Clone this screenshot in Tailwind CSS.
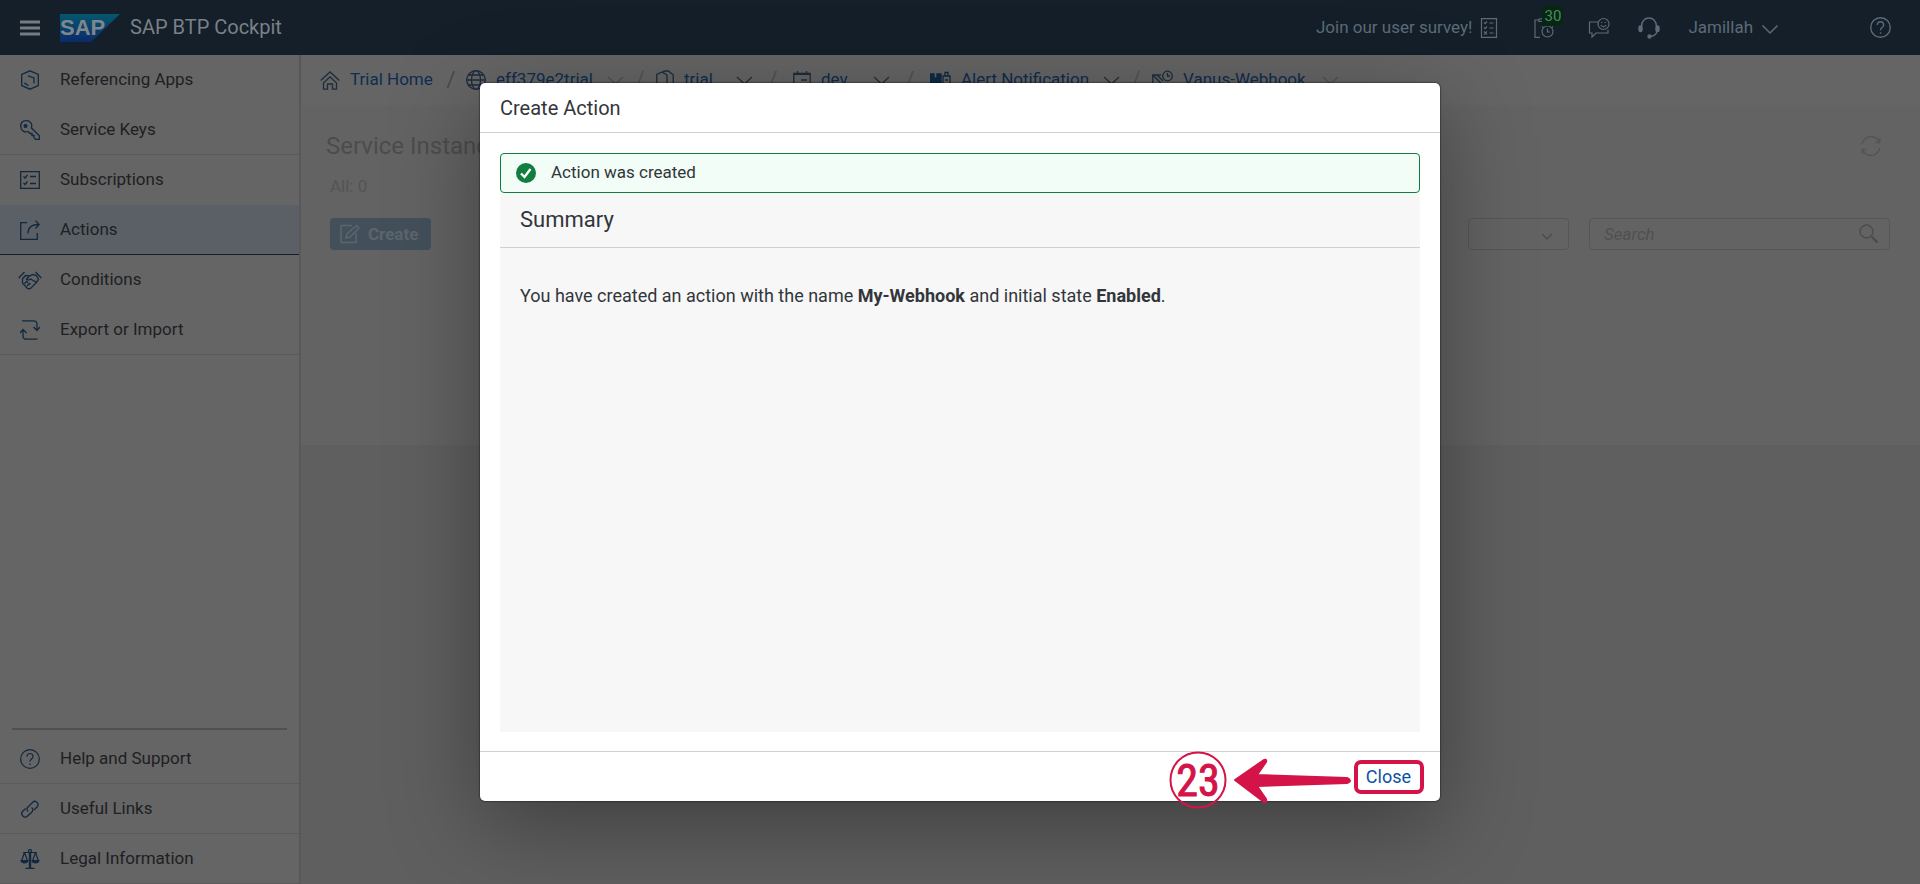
<!DOCTYPE html>
<html lang="en">
<head>
<meta charset="utf-8">
<meta name="viewport" content="width=device-width, initial-scale=1">
<title>SAP BTP Cockpit</title>
<script src="https://cdn.jsdelivr.net/npm/@tailwindcss/browser@4"></script>
</head>
<body class="relative flex min-h-screen flex-col overflow-hidden bg-[#5f5f5f] font-['Roboto',sans-serif] text-[17px] leading-6 text-[#1e2022]">

<header class="flex h-[55px] shrink-0 items-center bg-[#141f29] pl-5 pr-[29px] text-[#5c6b79]">
  <button type="button" aria-label="Menu" class="mr-5 text-[#747b81]">
    <svg class="size-5" viewBox="0 0 20 20" fill="currentColor"><path d="M0 2.500h20v3H0zM0 8.500h20v3H0zM0 14.500h20v3H0z"/></svg>
  </button>
  <svg class="mr-2.5 h-[30px] w-[60px]" viewBox="0 0 60 30" role="img" aria-label="SAP">
    <defs><linearGradient id="logo" x1="0" y1="0" x2="0" y2="1"><stop offset="0" stop-color="#04586d"/><stop offset="1" stop-color="#0b2a6b"/></linearGradient></defs>
    <path d="M0 1h60L31 29H0z" fill="url(#logo)"/>
    <text x="0" y="22" font-family="Liberation Sans" font-weight="700" font-size="22" fill="#7f868c">SAP</text>
  </svg>
  <h1 class="grow pb-0.5 text-[20px] text-[#7a8188]">SAP BTP Cockpit</h1>
  <a href="#" class="flex items-center gap-2"><span class="pb-0.5">Join our user survey!</span>
    <svg class="h-5 w-[18px]" viewBox="1 0 18 20" fill="none" stroke="currentColor" stroke-width="1.200"><path d="M2.500.6h15v18.800h-15zM5 4.500l1.200 1.200L8 3.500M5 9.500l1.200 1.200L8 8.500M5 13.500l3 3M8 13.500l-3 3M10.500 5h4M10.500 10h4M10.500 15h4"/></svg>
  </a>
  <button type="button" aria-label="30 notifications" class="relative ml-9">
    <svg class="h-5 w-[22px]" viewBox="0 0 22 20" fill="none" stroke="currentColor" stroke-width="1.200"><path d="M5 2H1v17.400h5M5 3.500V1h2l1-1h1v3.500z"/><circle cx="13.500" cy="13.500" r="5.500"/><path d="M13.500 10.500v3.500H16M9 8.500l-1 1M18 8.500l1 1"/></svg>
    <span class="absolute -top-3 left-2 rounded bg-[#062713] px-0.5 text-[15px] leading-5 text-[#4f8a5f]">30</span>
  </button>
  <button type="button" aria-label="Feedback" class="ml-8">
    <svg class="size-[22px]" viewBox="0 0 22 22" fill="none" stroke="currentColor" stroke-width="1.200"><path d="M10 5H1.500v11H4v4l4-4h12v-3"/><circle cx="15.500" cy="7" r="5.500"/><path d="M12.800 8q2.700 3.800 5.400 0M13.700 5v1M17.300 5v1"/></svg>
  </button>
  <button type="button" aria-label="Support" class="ml-7">
    <svg class="size-[22px]" viewBox="0 0 22 22" fill="none" stroke="currentColor" stroke-width="1.400"><path d="M3.500 9.500C3.500 4 7 1 11 1s7.500 3 7.500 8.500M19 13.500c0 4-3 5.500-7 6"/><rect x="1" y="9" width="3" height="5.500" rx="1.500" fill="currentColor"/><rect x="18" y="9" width="3" height="5.500" rx="1.500" fill="currentColor"/><circle cx="11.500" cy="19.500" r="1.500" fill="currentColor"/></svg>
  </button>
  <button type="button" class="ml-7 mr-[91px] flex items-center gap-2"><span class="pb-0.5">Jamillah</span>
    <svg class="h-5 w-[18px]" viewBox="0 0 18 20" fill="none" stroke="currentColor" stroke-width="1.500"><path d="M1.500 7.500L9 15l7.500-7.500"/></svg>
  </button>
  <button type="button" aria-label="Help">
    <svg class="size-[21px]" viewBox="0 0 20 20" fill="none" stroke="currentColor" stroke-width="1.300"><circle cx="10" cy="10" r="9.300"/><path d="M7 7.500C7 3.500 13 3.500 13 7.500c0 2.500-3 2.500-3 5M10 14.500V16"/></svg>
  </button>
</header>

<div class="flex grow">
  <nav aria-label="Main" class="flex w-[301px] shrink-0 flex-col border-r-2 border-[#585858] bg-[#656565]">
    <ul>
      <li><a href="#" class="flex h-[50px] items-center gap-5 pl-5">
        <svg class="size-5 text-[#12283f]" viewBox="0 0 20 20" fill="none" stroke="currentColor" stroke-width="1.300"><path d="M10 .8l8.300 3.700v11L10 19.200l-8.300-3.700v-11zM8 5.800l6 2.200v5.500M5 12.500v1l3.500 2"/></svg><span class="pb-0.5">Referencing Apps</span></a></li>
      <li><a href="#" class="flex h-[50px] items-center gap-5 border-b border-[#5a5a5a] pl-5">
        <svg class="size-5 text-[#12283f]" viewBox="0 0 20 20" fill="none" stroke="currentColor" stroke-width="1.300"><circle cx="5.500" cy="6" r="1.400" fill="currentColor"/><path d="M11.500 8C13 4 10 .7 6.500.7 3 .7.700 3 .7 6.500c0 3.500 3.500 6.500 7.300 5l2 2h2v2h2v2l1.500 1.800h3.800v-3.500z"/></svg><span class="pb-0.5">Service Keys</span></a></li>
      <li><a href="#" class="flex h-[50px] items-center gap-5 pl-5">
        <svg class="size-5 text-[#12283f]" viewBox="0 0 20 20" fill="none" stroke="currentColor" stroke-width="1.300"><path d="M.7 1.700h18.600v16.600H.7zM3.500 6.500l1.500 1.500 2.500-3M3.500 13l1.500 1.500 2.500-3M10 6.500h6M10 13.500h6"/></svg><span class="pb-0.5">Subscriptions</span></a></li>
      <li><a href="#" aria-current="page" class="flex h-[50px] items-center gap-5 border-b border-[#12202e] bg-[#5b6066] pl-5">
        <svg class="size-5 text-[#12283f]" viewBox="0 0 20 20" fill="none" stroke="currentColor" stroke-width="1.300"><path d="M7 2.700H.7v16.600h16.600V13M8 13.500C8 8 11 4.500 19 4.500M15.500.8L19.200 4.500l-3.700 4"/></svg><span class="pb-0.5">Actions</span></a></li>
      <li><a href="#" class="flex h-[50px] items-center gap-5 pl-[18px]">
        <svg class="-mr-0.5 h-5 w-6" viewBox="0 0 24 20" fill="none" stroke="#12283f" stroke-width="1.300"><path d="M.7 8L6.500 2M17.500 2L23.300 8M4 9.500L7.500 5.500l4 .5 3-1.500 4 1 2 4-2 2.500M11.500 6L8.500 9q1.500 2 4 0l6 3.500-5.500 5.500q-2 1.500-4 0L4.500 13V9.500M6.500 13.500l2-2 1.500 1.500M9 16l2.500-2.500 1 1"/></svg><span class="pb-0.5">Conditions</span></a></li>
      <li><a href="#" class="flex h-[50px] items-center gap-5 border-b border-[#5a5a5a] pl-5">
        <svg class="size-5 text-[#12283f]" viewBox="0 0 20 20" fill="none" stroke="currentColor" stroke-width="1.300"><path d="M2 .8h11.500q3.500 0 3.500 3.500V10M13.500 7L17 10.500 20 7M17.500 19.200H6.500Q3 19.200 3 15.700V10M0 13L3 9.500 6.500 13"/></svg><span class="pb-0.5">Export or Import</span></a></li>
    </ul>
    <hr class="mx-3 mb-1 mt-auto border-t-2 border-[#505050]">
    <ul>
      <li><a href="#" class="flex h-[50px] items-center gap-5 border-b border-[#5a5a5a] pl-5">
        <svg class="size-5 text-[#12283f]" viewBox="0 0 20 20" fill="none" stroke="currentColor" stroke-width="1.200"><circle cx="10" cy="10" r="9.300"/><path d="M7 7.500C7 3.500 13 3.500 13 7.500c0 2.500-3 2.500-3 5M10 14.500V16"/></svg><span class="pb-0.5">Help and Support</span></a></li>
      <li><a href="#" class="flex h-[50px] items-center gap-5 border-b border-[#5a5a5a] pl-5">
        <svg class="size-5 text-[#12283f]" viewBox="0 0 20 20" fill="none" stroke="currentColor" stroke-width="1.300"><path d="M8 12.500c-2-2-1-3.500 0-4.500l5-5c2-2 6.500 1 4.500 4.500L14 11M11.500 8.500c2 1.500 1.500 3.500 0 5l-4.500 4c-2.500 2-7-1.500-4.500-5L5.500 9.500"/></svg><span class="pb-0.5">Useful Links</span></a></li>
      <li><a href="#" class="flex h-[50px] items-center gap-5 border-b border-[#5a5a5a] pl-5">
        <svg class="size-5 text-[#12283f]" viewBox="0 0 20 20" fill="none" stroke="currentColor" stroke-width="1.200"><path d="M3 3.500h14M4.500 3.500L1.500 12M4.500 3.500l3 8.500M15.500 3.500l-3 8.500M15.500 3.500l3 8.500M5.500 19.300h9"/><path d="M1 11.500h7q-.5 2.500-3.500 2.500T1 11.500zM12 11.500h7q-.5 2.500-3.500 2.500T12 11.500z" fill="currentColor"/><path d="M10 3v16" stroke-width="2.400"/><circle cx="10" cy="2" r="1.500"/></svg><span class="pb-0.5">Legal Information</span></a></li>
    </ul>
  </nav>

  <main class="min-w-0 grow">
    <nav aria-label="Breadcrumb" class="flex h-[50px] items-center whitespace-nowrap bg-[#656565] pl-[19px] text-[#0f2d50]">
      <a href="#" class="flex w-[116px] items-center gap-2.5">
        <svg class="size-5 text-[#1c2c3c]" viewBox="0 0 20 20" fill="none" stroke="currentColor" stroke-width="1.300"><path d="M.7 10.500L10 2l9.300 8.500M3.500 13L10 6.800l6.500 6.200M3.500 12.500v6.700h4V14h5v5.200h4v-6.700"/></svg><span class="pb-0.5">Trial Home</span></a>
      <span class="w-[30px] text-center text-[22px] text-[#4a4a4a]">/</span>
      <a href="#" class="flex w-[141px] items-center gap-2.5">
        <svg class="size-5 text-[#1c2c3c]" viewBox="0 0 20 20" fill="none" stroke="currentColor" stroke-width="1.300"><circle cx="10" cy="10" r="9.300"/><ellipse cx="10" cy="10" rx="4.500" ry="9.300"/><path d="M.7 10h18.600M2.500 5h15M2.500 15h15"/></svg><span class="pb-0.5">eff379e2trial</span></a>
      <svg class="h-4 w-[17px] text-[#505050]" viewBox="0 0 17 16" fill="none" stroke="currentColor" stroke-width="1.300"><path d="M1 5l7.500 7L16 5"/></svg>
      <span class="w-8 text-center text-[22px] text-[#525252]">/</span>
      <a href="#" class="flex w-20 items-center gap-2.5">
        <svg class="h-5 w-[18px] text-[#1c2c3c]" viewBox="0 0 18 20" fill="none" stroke="currentColor" stroke-width="1.300"><path d="M4 17H.8V4.500L6 2l5 3v12H4M7 1.500L12 .8l5.200 4V17H11"/></svg><span class="pb-0.5">trial</span></a>
      <svg class="h-4 w-[17px] text-[#2a2f35]" viewBox="0 0 17 16" fill="none" stroke="currentColor" stroke-width="1.300"><path d="M1 5l7.500 7L16 5"/></svg>
      <span class="w-10 text-center text-[22px] text-[#525252]">/</span>
      <a href="#" class="flex w-20 items-center gap-2.5">
        <svg class="h-5 w-[18px] text-[#1c2c3c]" viewBox="0 0 18 20" fill="none" stroke="currentColor" stroke-width="1.300"><path d="M.8 3.500h16.400V18H.8zM4.500 1v3M13.500 1v3M8 10h6"/><path d="M1 4h16" stroke-width="2"/></svg><span class="pb-0.5">dev</span></a>
      <svg class="h-4 w-[17px] text-[#2a2f35]" viewBox="0 0 17 16" fill="none" stroke="currentColor" stroke-width="1.300"><path d="M1 5l7.500 7L16 5"/></svg>
      <span class="w-10 text-center text-[22px] text-[#525252]">/</span>
      <a href="#" class="flex w-[173px] items-center gap-2.5">
        <svg class="h-5 w-[21px] text-[#0e2a44]" viewBox="0 0 21 20" fill="none" stroke="currentColor" stroke-width="1.300"><path d="M.5 4H4v4h3V4h4v14H.5z" fill="currentColor"/><path d="M13 6h7v12h-7zM15 6V2.500h3V6M15 10h3M15 14h3"/></svg><span class="pb-0.5">Alert Notification</span></a>
      <svg class="h-4 w-[17px] text-[#2a2f35]" viewBox="0 0 17 16" fill="none" stroke="currentColor" stroke-width="1.300"><path d="M1 5l7.500 7L16 5"/></svg>
      <span class="w-8 text-center text-[22px] text-[#525252]">/</span>
      <a href="#" class="flex w-[170px] items-center gap-2.5">
        <svg class="h-5 w-[21px] text-[#1c2c3c]" viewBox="0 0 21 20" fill="none" stroke="currentColor" stroke-width="1.300"><circle cx="15.500" cy="6" r="4.800"/><path d="M15.500 3v3H18M9 5H.8v5M.8 5l8 8M5 5l6 6M.8 10v8h16v-5"/></svg><span class="pb-0.5">Vanus-Webhook</span></a>
      <svg class="h-4 w-[17px] text-[#525252]" viewBox="0 0 17 16" fill="none" stroke="currentColor" stroke-width="1.300"><path d="M1 5l7.500 7L16 5"/></svg>
    </nav>
    <section class="flex h-[340px] flex-col bg-[#636363] pl-[25px] pr-[30px] pt-[25px] text-[#4c4c4c]">
      <div class="flex h-8 items-center justify-between">
        <h2 class="text-[24px]">Service Instance: Vanus-Webhook - Actions</h2>
        <button type="button" aria-label="Refresh" class="mr-2 text-[#545454]">
          <svg class="size-[22px]" viewBox="0 0 22 22" fill="none" stroke="currentColor" stroke-width="1.400"><path d="M2 9C3.500 3.500 8 1.500 11 1.500c4 0 7 2.500 8.500 6M15.500 7.500h4.300V3M20 13c-1.500 5.500-6 7.500-9 7.500-4 0-7-2.500-8.500-6M6.500 14.500H2.200V19"/></svg>
        </button>
      </div>
      <p class="ml-1 mt-3 text-[#545454]">All: 0</p>
      <div class="mt-5 flex items-center">
        <button type="button" class="ml-1 mr-auto flex h-8 w-[101px] items-center gap-2 rounded bg-[#43505b] pl-2.5 font-bold text-[#5c656d]">
          <svg class="size-5" viewBox="0 0 20 20" fill="none" stroke="currentColor" stroke-width="1.500"><path d="M12 1.500H1v17h15V9M6 14l1-4L16.500 1.500l2.500 2.500L10 13z"/></svg>Create</button>
        <div class="relative mr-5 h-8 w-[101px]">
          <select aria-label="Status" class="size-full appearance-none rounded-sm border border-[#565656]"><option></option></select>
          <svg class="pointer-events-none absolute right-4 top-2.5 h-4 w-3" viewBox="0 0 12 16" fill="none" stroke="currentColor" stroke-width="1.500"><path d="M1 6l5 5 5-5"/></svg>
        </div>
        <label class="flex h-8 w-[301px] items-center rounded-sm border border-[#565656] px-3.5">
          <input type="text" aria-label="Search" placeholder="Search" class="min-w-0 grow italic placeholder:text-[#505050]">
          <svg class="-mr-1 size-5" viewBox="0 0 20 20" fill="none" stroke="currentColor" stroke-width="1.400"><circle cx="7.500" cy="7.500" r="6.500"/><path d="M12.500 12.500l6 6" stroke-width="2.400"/></svg>
        </label>
      </div>
    </section>
  </main>
</div>

<div class="absolute inset-0 flex items-center justify-center">
  <div role="dialog" aria-modal="true" aria-labelledby="dialog-title" class="relative flex w-1/2 flex-col rounded-[5px] bg-white text-[#32363a] shadow-[0_23px_90px_rgba(0,0,0,0.35),0_0_2px_#000]">
    <h2 id="dialog-title" class="flex h-[50px] items-center border-b border-[#d0d0d0] px-5 text-[20px]">Create Action</h2>
    <div class="px-5 pb-[19px] pt-5">
      <div role="status" class="flex h-10 items-center gap-[15px] rounded border border-[#107e3e] bg-[#f1fdf6] px-[15px]">
        <svg class="size-5" viewBox="0 0 20 20"><circle cx="10" cy="10" r="10" fill="#107e3e"/><path d="M5 10.500l3.500 3.500L14.500 6" fill="none" stroke="#fff" stroke-width="2.400"/></svg>
        <span class="pb-0.5">Action was created</span>
      </div>
      <section class="min-h-[539px] bg-[#f7f7f7]">
        <h3 class="flex h-[55px] items-center border-b border-[#d0d0d0] px-5 text-[22px]">Summary</h3>
        <p class="px-5 pt-9 text-[18px]">You have created an action with the name <b>My-Webhook</b> and initial state <b>Enabled</b>.</p>
      </section>
    </div>
    <footer class="flex h-[50px] items-center justify-end border-t border-[#d0d0d0] pr-[29px]">
      <button type="button" class="text-[18px] text-[#0854a0]">Close</button>
    </footer>
    <svg class="pointer-events-none absolute -bottom-2.5 right-3.5 h-16 w-[260px]" viewBox="0 0 260 64" fill="none" stroke="#d41448">
      <circle cx="32" cy="33" r="27.500" stroke-width="2"/>
      <text x="32" y="49" text-anchor="middle" font-family="'Liberation Sans Narrow','Roboto Condensed',Roboto,sans-serif" font-size="44" fill="#d41448" stroke="#d41448">23</text>
      <path d="M69 33L98 13q3-1 2 2L91 28l90 3q6 3 0 5l-90 3 9 13q1 4-2 3z" fill="#d41448" stroke-width="2" stroke-linejoin="round"/>
      <rect x="190" y="15" width="66" height="30" rx="5" stroke-width="4"/>
    </svg>
  </div>
</div>
</body>
</html>
